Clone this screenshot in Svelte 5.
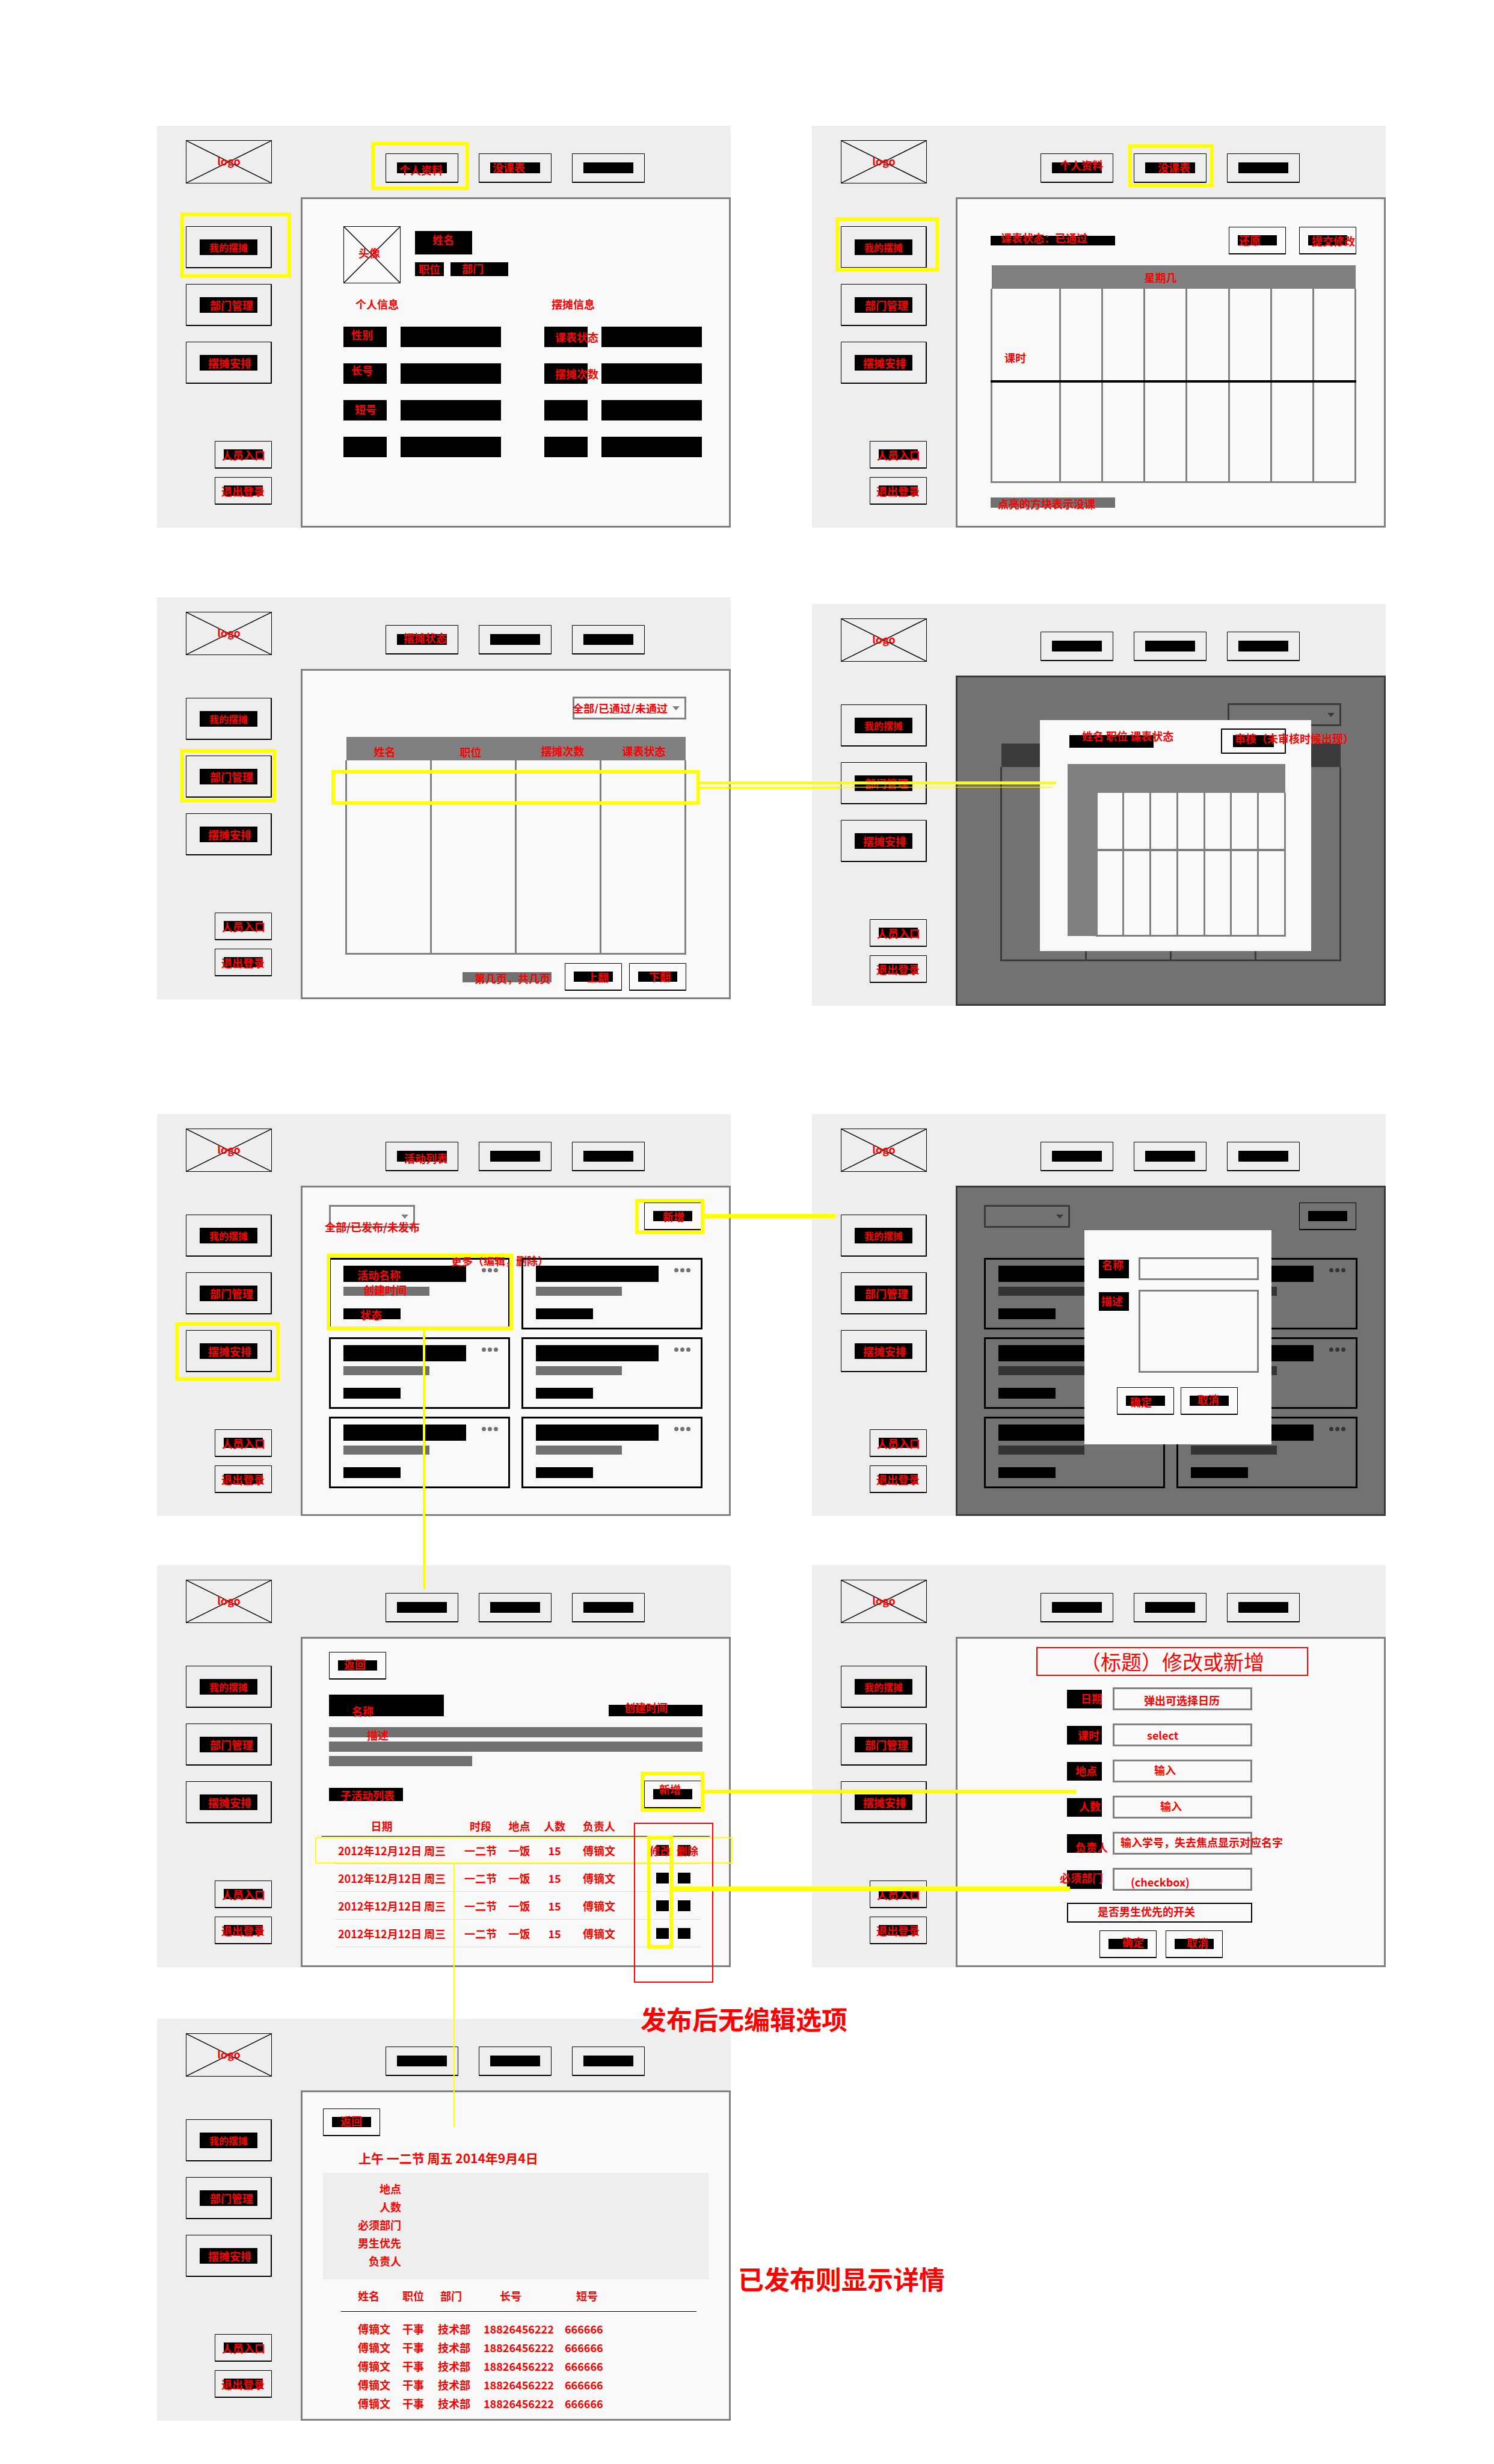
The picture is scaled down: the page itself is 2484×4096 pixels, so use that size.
<script>
  const nav = [
    { text: '我的摆摊', x: 16, y: 5, small: true },
    { text: '部门管理', x: 17, y: 4 },
    { text: '摆摊安排', x: 14, y: 4 }
  ];
  const account = [
    { text: '人员入口', x: -3, y: 0 },
    { text: '退出登录', x: -4, y: 0 }
  ];

  const profileFields = [
    [{ text: '性别', x: 13, y: 4 }, { text: '课表状态', x: 18, y: 8 }],
    [{ text: '长号', x: 13, y: 2 }, { text: '摆摊次数', x: 18, y: 8 }],
    [{ text: '短号', x: 19, y: 6 }, null],
    [null, null]
  ];

  const memberColumns = [
    { text: '姓名', x: 46, y: 15 },
    { text: '职位', x: 48, y: 16 },
    { text: '摆摊次数', x: 42, y: 14 },
    { text: '课表状态', x: 36, y: 14 }
  ];

  const formFields = [
    { label: { text: '日期', x: 23, y: 5 }, hint: { text: '弹出可选择日历', x: 52, y: 12 } },
    { label: { text: '课时', x: 18, y: 6 }, hint: { text: 'select', x: 57, y: 10 }, select: true },
    { label: { text: '地点', x: 14, y: 5 }, hint: { text: '输入', x: 69, y: 8 } },
    { label: { text: '人数', x: 20, y: 4 }, hint: { text: '输入', x: 79, y: 8 } },
    { label: { text: '负责人', x: 14, y: 12 }, hint: { text: '输入学号，失去焦点显示对应名字', x: 13, y: 8 } },
    { label: { text: '必须部门', x: -12, y: 3 }, hint: { text: '(checkbox)', x: 30, y: 14 } }
  ];

  const shifts = [0, 1, 2, 3];
  const people = [0, 1, 2, 3, 4];
  const details = ['地点', '人数', '必须部门', '男生优先', '负责人'];
</script>

{#snippet note(n)}
  {#if n}
    <span class="note" class:small={n.small} style:left="{n.x}px" style:top="{n.y}px">{n.text}</span>
  {/if}
{/snippet}

{#snippet mark(x, y, w, h, kind = '')}
  <i class="mark {kind}" style:left="{x}px" style:top="{y}px" style:width="{w}px" style:height="{h}px"></i>
{/snippet}

{#snippet line(x, y, w, h)}
  <i class="line" style:left="{x}px" style:top="{y}px" style:width="{w}px" style:height="{h}px"></i>
{/snippet}

{#snippet button(n, name = '')}
  <button class="btn" aria-label={n ? n.text : name}><span class="bar">{@render note(n)}</span></button>
{/snippet}

{#snippet cross()}
  <svg viewBox="0 0 100 100" preserveAspectRatio="none" aria-hidden="true">
    <path d="M0 0L100 100M100 0L0 100" />
  </svg>
{/snippet}

{#snippet screen(tabs, content, overlay, extra = '')}
  <section class="screen {extra}">
    <div class="brand">
      <div class="logo">{@render cross()}<span>logo</span></div>
    </div>
    <header class="tabs">
      {#each [0, 1, 2] as i}
        <button class="tab" aria-label={tabs[i] ? tabs[i].text : `标签 ${i + 1}`}>
          <span class="bar">{@render note(tabs[i])}</span>
        </button>
      {/each}
    </header>
    <nav class="side">
      {#each nav as item}
        <button class="nav"><span class="bar">{@render note(item)}</span></button>
      {/each}
      <div class="account">
        {#each account as item}{@render button(item)}{/each}
      </div>
    </nav>
    <main class="panel">{@render content()}</main>
    {#if overlay}<div class="overlay">{@render overlay()}</div>{/if}
  </section>
{/snippet}

{#snippet profile()}
  <div class="page profile">
    <div class="person">
      <div class="avatar">{@render cross()}{@render note({ text: '头像', x: 24, y: 34 })}</div>
      <div class="who">
        <div class="bar name">{@render note({ text: '姓名', x: 29, y: 5 })}</div>
        <div class="roles">
          <div class="bar post">{@render note({ text: '职位', x: 6, y: 2 })}</div>
          <div class="bar dept">{@render note({ text: '部门', x: 19, y: 1 })}</div>
        </div>
      </div>
    </div>
    <div class="heads"><h2>个人信息</h2><h2>摆摊信息</h2></div>
    <div class="facts">
      {#each profileFields as row}
        {#each row as cell}
          <div class="fact">
            <div class="bar key">{@render note(cell)}</div>
            <div class="bar value"></div>
          </div>
        {/each}
      {/each}
    </div>
  </div>
{/snippet}
{#snippet profileMarks()}
  {@render mark(356, 27, 163, 80)}
  {@render mark(39, 144, 184, 109)}
{/snippet}

{#snippet timetable()}
  <div class="page schedule">
    <div class="toolbar">
      <div class="bar status">{@render note({ text: '课表状态：已通过', x: 17, y: -6 })}</div>
      <div class="actions">
        {@render button({ text: '还原', x: 2, y: -1 })}
        {@render button({ text: '提交修改', x: 6, y: 0 })}
      </div>
    </div>
    <table class="week">
      <colgroup><col class="period" />{#each Array(7) as _}<col />{/each}</colgroup>
      <thead><tr><th colspan="8">星期几</th></tr></thead>
      <tbody>
        <tr><td>课时</td>{#each Array(7) as _}<td></td>{/each}</tr>
        <tr>{#each Array(8) as _}<td></td>{/each}</tr>
      </tbody>
    </table>
    <div class="bar grey legend">{@render note({ text: '点亮的方块表示没课', x: 12, y: 1 })}</div>
  </div>
{/snippet}
{#snippet timetableMarks()}
  {@render mark(526, 31, 142, 71)}
  {@render mark(39, 152, 172, 90)}
{/snippet}

{#snippet members(full)}
  <div class="page members">
    <div class="filter">
      <div class="dropdown wide">
        <select aria-label="课表状态">
          {#if full}<option>全部/已通过/未通过</option>{/if}
        </select>
      </div>
    </div>
    <table class="roster">
      <thead>
        <tr>
          {#each memberColumns as col}
            <th>{#if full}<div class="cell">{@render note(col)}</div>{/if}</th>
          {/each}
        </tr>
      </thead>
      <tbody><tr>{#each memberColumns as _}<td></td>{/each}</tr></tbody>
    </table>
    {#if full}
      <div class="pager">
        <div class="bar grey count">{@render note({ text: '第几页，共几页', x: 20, y: 1 })}</div>
        <div class="pages">
          {@render button({ text: '上翻', x: 22, y: 0 })}
          {@render button({ text: '下翻', x: 18, y: -1 })}
        </div>
      </div>
    {/if}
  </div>
{/snippet}
{#snippet roster()}{@render members(true)}{/snippet}
{#snippet rosterMarks()}
  {@render mark(39, 252, 159, 89)}
  {@render mark(290, 287, 613, 58)}
  {@render line(903, 306, 592, 5)}
  {@render line(903, 315, 585, 1)}
  {@render line(903, 317, 234, 1)}
{/snippet}

{#snippet review()}
  {@render members(false)}
  <div class="backdrop">
    <div class="dialog audit">
      <div class="audit-head">
        <div class="bar subject">{@render note({ text: '姓名 职位 课表状态', x: 21, y: -8 })}</div>
        <button class="btn approve" aria-label="审核">
          <span class="bar">{@render note({ text: '审核（未审核时候出现）', x: 3, y: -4 })}</span>
        </button>
      </div>
      <table class="mini">
        <colgroup><col class="period" />{#each Array(7) as _}<col />{/each}</colgroup>
        <thead><tr><th colspan="8" aria-label="星期"></th></tr></thead>
        <tbody>
          {#each [0, 1] as _}
            <tr><th aria-label="课时"></th>{#each Array(7) as _}<td></td>{/each}</tr>
          {/each}
        </tbody>
      </table>
    </div>
  </div>
{/snippet}

{#snippet cards(full)}
  <div class="page events">
    <div class="toolbar">
      <div class="dropdown">
        <select aria-label="发布状态"></select>
        {#if full}{@render note({ text: '全部/已发布/未发布', x: -7, y: 27 })}{/if}
      </div>
      {@render button(full ? { text: '新增', x: 16, y: 0 } : null, '新增')}
    </div>
    <div class="cards">
      {#each Array(6) as _, i}
        <article class="card">
          <div class="bar title">{#if full && i === 0}{@render note({ text: '活动名称', x: 23, y: 6 })}{/if}</div>
          <div class="bar grey date">{#if full && i === 0}{@render note({ text: '创建时间', x: 33, y: -4 })}{/if}</div>
          <div class="bar state">{#if full && i === 0}{@render note({ text: '状态', x: 28, y: 1 })}{/if}</div>
          <button class="more" aria-label="更多"><i></i><i></i><i></i></button>
          {#if full && i === 0}{@render note({ text: '更多（编辑，删除）', x: 200, y: -8 })}{/if}
        </article>
      {/each}
    </div>
  </div>
{/snippet}
{#snippet events()}{@render cards(true)}{/snippet}
{#snippet eventMarks()}
  {@render mark(30, 346, 174, 97)}
  {@render mark(795, 141, 115, 58)}
  {@render mark(282, 232, 310, 127)}
  {@render line(910, 166, 218, 7)}
  {@render line(442, 358, 4, 431)}
{/snippet}

{#snippet newEvent()}
  {@render cards(false)}
  <div class="backdrop">
    <form class="dialog create">
      <div class="row">
        <label class="bar" for="event-name">{@render note({ text: '名称', x: 5, y: -1 })}</label>
        <input id="event-name" />
      </div>
      <div class="row">
        <label class="bar" for="event-text">{@render note({ text: '描述', x: 4, y: 5 })}</label>
        <textarea id="event-text"></textarea>
      </div>
      <div class="confirm">
        {@render button({ text: '确定', x: 7, y: 1 })}
        {@render button({ text: '取消', x: 13, y: -3 })}
      </div>
    </form>
  </div>
{/snippet}

{#snippet eventDetail()}
  <div class="page detail">
    {@render button({ text: '返回', x: 10, y: -3 })}
    <div class="headline">
      <div class="bar title">{@render note({ text: '名称', x: 38, y: 18 })}</div>
      <div class="bar created">{@render note({ text: '创建时间', x: 26, y: -5 })}</div>
    </div>
    <div class="summary">
      <div class="bar grey">{@render note({ text: '描述', x: 63, y: 4 })}</div>
      <div class="bar grey"></div>
      <div class="bar grey short"></div>
    </div>
    <div class="toolbar">
      <div class="bar sub">{@render note({ text: '子活动列表', x: 19, y: 3 })}</div>
      {@render button({ text: '新增', x: 10, y: -9 })}
    </div>
    <table class="shifts">
      <colgroup>
        <col class="c1" /><col class="c2" /><col class="c3" /><col class="c4" /><col class="c5" /><col />
      </colgroup>
      <thead>
        <tr><th class="day">日期</th><th>时段</th><th>地点</th><th>人数</th><th>负责人</th><th aria-label="操作"></th></tr>
      </thead>
      <tbody>
        {#each shifts as i}
          <tr>
            <td>2012年12月12日 周三</td><td>一二节</td><td>一饭</td><td>15</td><td>傅镝文</td>
            <td>
              <div class="ops">
                <button class="bar" aria-label="修改">{#if i === 0}{@render note({ text: '修改', x: -11, y: 0 })}{/if}</button>
                <button class="bar" aria-label="删除">{#if i === 0}{@render note({ text: '删除', x: -2, y: 0 })}{/if}</button>
              </div>
            </td>
          </tr>
        {/each}
      </tbody>
    </table>
  </div>
{/snippet}
{#snippet detailMarks()}
  {@render mark(263, 452, 694, 44, 'thin')}
  {@render mark(793, 428, 132, 266, 'red')}
  {@render mark(804, 343, 106, 67)}
  {@render mark(815, 450, 43, 187)}
  {@render line(910, 373, 618, 6)}
  {@render line(859, 534, 659, 8)}
  {@render line(493, 496, 2, 438)}
{/snippet}

{#snippet editForm()}
  <form class="page edit">
    <h1>（标题）修改或新增</h1>
    <div class="fields">
      {#each formFields as f, i}
        <div class="row">
          <label class="bar" for="field-{i}">{@render note(f.label)}</label>
          <div class="control">
            {#if f.select}<select id="field-{i}"></select>{:else}<input id="field-{i}" />{/if}
            {@render note(f.hint)}
          </div>
        </div>
      {/each}
    </div>
    <button type="button" class="switch" aria-pressed="false">{@render note({ text: '是否男生优先的开关', x: 49, y: 3 })}</button>
    <div class="confirm">
      {@render button({ text: '确定', x: 23, y: -4 })}
      {@render button({ text: '取消', x: 20, y: -3 })}
    </div>
  </form>
{/snippet}

{#snippet shiftDetail()}
  <div class="page shift">
    {@render button({ text: '返回', x: 14, y: -3 })}
    <h2>上午 一二节 周五 2014年9月4日</h2>
    <ul class="info">
      {#each details as d}<li>{d}</li>{/each}
    </ul>
    <table class="people">
      <colgroup><col class="c1" /><col class="c2" /><col class="c3" /><col class="c4" /><col /></colgroup>
      <thead>
        <tr><th>姓名</th><th>职位</th><th class="dept">部门</th><th class="long">长号</th><th class="brief">短号</th></tr>
      </thead>
      <tbody>
        {#each people as _}
          <tr><td>傅镝文</td><td>干事</td><td>技术部</td><td>18826456222</td><td>666666</td></tr>
        {/each}
      </tbody>
    </table>
  </div>
{/snippet}
{#snippet shiftMarks()}
  <strong class="remark" style:left="804px" style:top="-22px">发布后无编辑选项</strong>
  <strong class="remark" style:left="966px" style:top="410px">已发布则显示详情</strong>
{/snippet}

<div class="board">
  <div class="column">
    {@render screen([{ text: '个人资料', x: 4, y: 3 }, { text: '没课表', x: 4, y: -1 }], profile, profileMarks)}
    {@render screen([{ text: '摆摊状态', x: 11, y: -3 }], roster, rosterMarks, 'members-step')}
    {@render screen([{ text: '活动列表', x: 12, y: 3 }], events, eventMarks, 'events-step')}
    {@render screen([], eventDetail, detailMarks, 'detail-step')}
    {@render screen([], shiftDetail, shiftMarks, 'shift-step')}
  </div>
  <div class="column">
    {@render screen([{ text: '个人资料', x: 13, y: -5 }, { text: '没课表', x: 21, y: -1 }], timetable, timetableMarks)}
    {@render screen([], review, null, 'review-step')}
    {@render screen([], newEvent, null, 'create-step')}
    {@render screen([], editForm, null, 'detail-step')}
  </div>
</div>

<style>
  :global(body) {
    margin: 0;
    background: #fff;
  }
  .board {
    display: grid;
    grid-template-columns: 1fr 1fr;
    gap: 135px;
    padding: 209px 180px 72px 261px;
    font: 700 18px/1 'Noto Sans CJK SC', sans-serif;
    color: #f00;
  }
  .board :is(button, input, select, textarea) {
    box-sizing: border-box;
    margin: 0;
    padding: 0;
    border: 0;
    border-radius: 0;
    background: none;
    font: inherit;
    color: inherit;
    text-align: left;
    appearance: none;
  }
  h1, h2, ul { margin: 0; padding: 0; font: inherit; list-style: none; }
  table { border-collapse: collapse; table-layout: fixed; width: 100%; }
  th, td { padding: 0; font-weight: inherit; }

  .column { display: flex; flex-direction: column; min-width: 0; }
  .members-step { margin-top: 116px; }
  .review-step { margin-top: 127px; }
  .events-step { margin-top: 191px; }
  .create-step { margin-top: 180px; }
  .detail-step { margin-top: 82px; }
  .shift-step { margin-top: 86px; }

  .screen {
    position: relative;
    display: grid;
    grid-template-columns: 239px 1fr;
    grid-template-rows: 119px 1fr;
    min-height: 668px;
    background: #eee;
  }
  .brand { padding: 24px 0 0 48px; }
  .logo {
    position: relative;
    display: flex;
    align-items: center;
    justify-content: center;
    box-sizing: border-box;
    width: 143px;
    height: 72px;
    padding-bottom: 5px;
    border: 1px solid #000;
  }
  .logo span { position: relative; }
  svg { position: absolute; inset: 0; width: 100%; height: 100%; }
  svg path { fill: none; stroke: #000; stroke-width: 1.5; vector-effect: non-scaling-stroke; }

  .bar { position: relative; display: block; background: #000; }
  .bar.grey { background: #717171; }
  .note { position: absolute; white-space: nowrap; line-height: 1; }
  .note.small { font-size: 16px; }

  .tabs { display: flex; align-items: flex-start; gap: 34px; padding: 46px 0 0 141px; }
  .board .tab, .board .nav, .board .btn {
    flex: none;
    border: 1px solid #000;
    border-bottom-width: 2px;
    border-radius: 1px;
  }
  .board .tab { width: 121px; height: 49px; padding: 14px 18px; }
  .tab .bar { height: 18px; }
  .side { display: flex; flex-direction: column; gap: 26px; padding: 48px 0 0 48px; }
  .board .nav { width: 143px; height: 70px; padding: 20px 22px; border-right-width: 2px; }
  .nav .bar { height: 26px; }
  .account { display: flex; flex-direction: column; gap: 14px; padding: 69px 0 0 48px; }
  .board .btn { width: 95px; height: 46px; padding: 13px 14px; }
  .btn .bar { height: 17px; }

  .panel { position: relative; border: 3px solid #808080; background: #f9f9f9; min-width: 0; }
  .page { display: flex; flex-direction: column; }
  .toolbar { display: flex; align-items: center; justify-content: space-between; }
  .confirm { display: flex; }

  .profile { padding: 45px 44px 0 68px; }
  .person { display: flex; gap: 24px; }
  .avatar { position: relative; box-sizing: border-box; width: 95px; height: 95px; border: 1px solid #000; }
  .who { display: flex; flex-direction: column; gap: 13px; padding-top: 8px; }
  .name { width: 95px; height: 39px; }
  .roles { display: flex; gap: 11px; }
  .post { width: 48px; height: 23px; }
  .dept.bar { width: 96px; height: 23px; }
  .heads { display: grid; grid-template-columns: 326px 1fr; padding: 25px 0 29px 20px; }
  .facts { display: grid; grid-template-columns: 334px 1fr; row-gap: 27px; }
  .fact { display: flex; gap: 23px; }
  .key { width: 72px; height: 34px; }
  .value { width: 167px; height: 34px; }

  .schedule { padding: 46px 46px 0 55px; }
  .status { width: 207px; height: 16px; }
  .actions { display: flex; gap: 22px; }
  .week { margin-top: 18px; }
  .week th { height: 39px; background: #808080; text-align: left; padding-left: 254px; border: 0; }
  .week td { border: 3px solid #808080; vertical-align: top; }
  .week .period { width: 114px; }
  .week tbody tr:first-child td { height: 47px; padding: 105px 0 0 20px; border-top: 0; border-bottom: 4px solid #000; }
  .week tbody tr:last-child td { height: 164px; }
  .legend { width: 207px; height: 17px; margin-top: 24px; }

  .members { padding: 43px 71px 0 71px; }
  .filter { display: flex; justify-content: flex-end; }
  .dropdown { position: relative; width: 143px; height: 38px; box-shadow: inset 0 0 0 3px #808080; }
  .dropdown.wide { width: 189px; }
  .dropdown::after {
    content: '';
    position: absolute;
    top: 16px;
    right: 11px;
    border: 6px solid transparent;
    border-top: 7px solid #808080;
    border-bottom: 0;
  }
  .dropdown select { position: relative; width: 100%; height: 100%; }
  .roster { margin-top: 29px; }
  .roster th { height: 39px; background: #808080; vertical-align: top; }
  .cell { position: relative; height: 39px; text-align: left; }
  .roster td { height: 320px; border: 3px solid #808080; border-top: 0; }
  .pager { display: flex; align-items: center; justify-content: flex-end; gap: 22px; margin-top: 14px; }
  .count { width: 148px; height: 17px; }
  .pages { display: flex; gap: 12px; }

  .backdrop { position: absolute; inset: -3px; background: rgba(0, 0, 0, 0.542); }
  .dialog { box-sizing: border-box; background: #f9f9f9; }
  .audit { width: 451px; height: 384px; margin: 74px 0 0 140px; padding: 14px 42px 0 46px; }
  .audit-head { display: flex; align-items: center; justify-content: space-between; padding-left: 3px; }
  .subject { width: 140px; height: 21px; }
  .board .approve { width: 108px; height: 42px; padding: 9px 18px; border: 2px solid #000; }
  .approve .bar { height: 20px; }
  .mini { margin-top: 17px; }
  .mini th { background: #808080; }
  .mini thead th { height: 48px; }
  .mini .period { width: 48px; }
  .mini td { height: 93px; border: 3px solid #808080; border-top: 0; border-bottom-width: 4px; }
  .mini tr:last-child td { height: 139px; border-bottom-width: 3px; }

  .events { padding: 25px 44px 0 44px; }
  .events .toolbar, .detail .toolbar { padding-right: 2px; }
  .cards { display: grid; grid-template-columns: 1fr 1fr; gap: 13px 19px; margin-top: 46px; }
  .card { position: relative; box-sizing: border-box; height: 119px; padding: 10px 0 0 21px; border: 3px solid #000; }
  .card .title { width: 204px; height: 27px; }
  .card .date { width: 143px; height: 15px; margin-top: 8px; }
  .card .state { width: 95px; height: 18px; margin-top: 21px; }
  .board .more { position: absolute; top: 14px; right: 17px; display: flex; gap: 3px; }
  .more i { width: 7px; height: 7px; border-radius: 50%; background: #717171; }

  .create { display: flex; flex-direction: column; width: 311px; height: 356px; margin: 74px 0 0 214px; padding: 45px 21px 0 24px; }
  .row { display: flex; justify-content: space-between; }
  .create .row + .row { margin-top: 16px; }
  .create label { width: 50px; height: 31px; margin-top: 4px; }
  .board .create :is(input, textarea) { width: 200px; height: 38px; border: 3px solid #808080; resize: none; }
  .board .create textarea { height: 138px; }
  .create .confirm { gap: 11px; padding: 24px 0 0 30px; }

  .detail { padding: 22px 44px 0 44px; }
  .headline { display: flex; align-items: flex-end; justify-content: space-between; margin-top: 25px; }
  .headline .title { width: 191px; height: 36px; }
  .created { width: 156px; height: 19px; }
  .summary { display: flex; flex-direction: column; gap: 7px; margin-top: 18px; }
  .summary .bar { height: 17px; }
  .summary .short { width: 238px; }
  .detail .toolbar { margin-top: 24px; }
  .sub { width: 123px; height: 22px; }
  .shifts { width: auto; margin: 11px -12px 0; text-align: center; }
  .shifts .c1 { width: 233px; }
  .shifts .c2 { width: 62px; }
  .shifts .c3 { width: 67px; }
  .shifts .c4 { width: 50px; }
  .shifts .c5 { width: 98px; }
  .shifts th { height: 35px; border-bottom: 1px solid #000; }
  .shifts .day { padding-right: 34px; }
  .shifts td { height: 46px; white-space: nowrap; }
  .shifts tbody tr { background: linear-gradient(#ddd, #ddd) 22px 100% / calc(100% - 38px) 1px no-repeat; }
  .ops { display: flex; gap: 15px; padding-left: 46px; }
  .board .ops .bar { width: 21px; height: 18px; background: #000; }

  .edit { padding: 14px 126px 0 131px; }
  .edit h1 { display: flex; align-items: center; justify-content: center; height: 44px; border: 2px solid #f00; font-size: 34px; font-weight: 400; }
  .fields { display: flex; flex-direction: column; gap: 22px; padding: 19px 93px 0 51px; }
  .fields label { flex: none; width: 58px; height: 31px; margin: 4px 18px 0 0; }
  .control { position: relative; flex: 1; height: 38px; }
  .board .control :is(input, select) { width: 100%; height: 100%; border: 3px solid #808080; }
  .board .switch { position: relative; height: 33px; margin: 20px 93px 0 51px; border: 2px solid #000; }
  .edit .confirm { gap: 15px; padding: 13px 0 0 105px; }

  .shift { align-items: flex-start; padding: 27px 34px 0 34px; }
  .shift h2 { margin: 26px 0 14px 59px; font-size: 21px; }
  .info { align-self: stretch; box-sizing: border-box; height: 177px; padding-top: 11px; background: #eee; line-height: 30px; }
  .info li { width: 130px; text-align: right; }
  .people { width: auto; align-self: stretch; margin: 10px 20px 0 30px; text-align: left; }
  .people .c1 { width: 102px; }
  .people .c2 { width: 59px; }
  .people .c3 { width: 76px; }
  .people .c4 { width: 135px; }
  .people th { height: 35px; padding-top: 8px; vertical-align: top; border-bottom: 1px solid #000; }
  .people td { height: 31px; white-space: nowrap; }
  .people tr > :first-child { padding-left: 28px; }
  .people .dept { padding-left: 4px; }
  .people .long { padding-left: 27px; }
  .people .brief { padding-left: 19px; }
  .people tbody::before { content: ''; display: block; height: 12px; }

  .overlay { position: absolute; inset: 0; z-index: 2; pointer-events: none; }
  .mark { position: absolute; box-sizing: border-box; border: 6px solid #ff0; }
  .mark.thin { border-width: 2px; }
  .mark.red { border: 2px solid #f00; }
  .line { position: absolute; background: #ff0; }
  .remark { position: absolute; font-size: 43px; font-weight: 700; white-space: nowrap; }
</style>
